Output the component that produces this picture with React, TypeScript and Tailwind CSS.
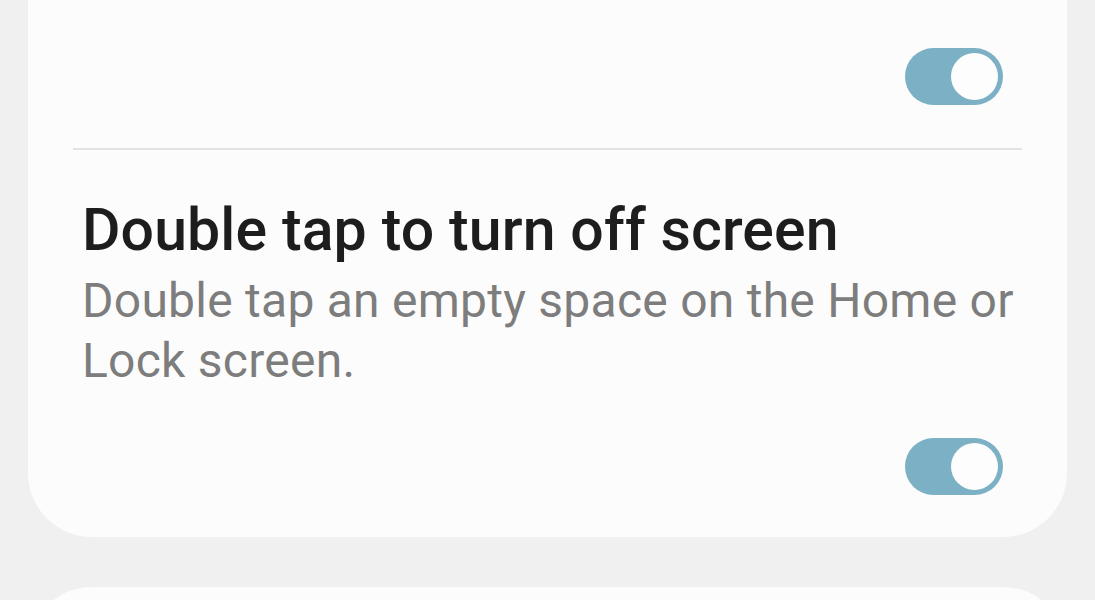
import { useState } from "react";

type ToggleProps = {
  on: boolean;
  onChange: () => void;
};

function Toggle({ on, onChange }: ToggleProps) {
  return (
    <button
      onClick={onChange}
      className={`relative h-[57px] w-[98px] rounded-full ${on ? "bg-[#7cb0c4]" : "bg-[#c8c8c8]"}`}
    >
      <span
        className={`absolute top-[5px] h-[47px] w-[47px] rounded-full bg-[#fdfdfd] ${on ? "right-[5px]" : "left-[5px]"}`}
      />
    </button>
  );
}

export default function App() {
  const [first, setFirst] = useState<boolean>(true);
  const [doubleTap, setDoubleTap] = useState<boolean>(true);

  return (
    <div
      className="h-[600px] w-full overflow-hidden bg-[#f0f0f0] px-[28px]"
      style={{ fontFamily: "Roboto, 'Noto Sans', sans-serif" }}
    >
      <div className="-mt-[40px] rounded-b-[64px] bg-[#fcfcfc] px-[45px]">
        {/* previous setting, cut off above */}
        <div className="flex justify-end pt-[88px] pb-[43px] pr-[19px]">
          <Toggle on={first} onChange={() => setFirst(!first)} />
        </div>

        <hr className="border-0 border-t-2 border-[#e3e3e3]" />

        {/* Double tap */}
        <div className="pl-[9px] pt-[45px]">
          <h2 className="text-[59px] leading-[70px] font-medium tracking-[0.1px] text-[#1d1d1d]">
            Double tap to turn off screen
          </h2>
          <p className="mt-[6px] text-[48px] leading-[60px] tracking-[0.25px] text-[#7d7d7d]">
            Double tap an empty space on the Home or
            <br />
            Lock screen.
          </p>
        </div>
        <div className="flex justify-end pt-[47px] pb-[42px] pr-[19px]">
          <Toggle on={doubleTap} onChange={() => setDoubleTap(!doubleTap)} />
        </div>
      </div>

      <div className="mt-[50px] h-[80px] rounded-t-[64px] bg-[#fcfcfc]" />
    </div>
  );
}
